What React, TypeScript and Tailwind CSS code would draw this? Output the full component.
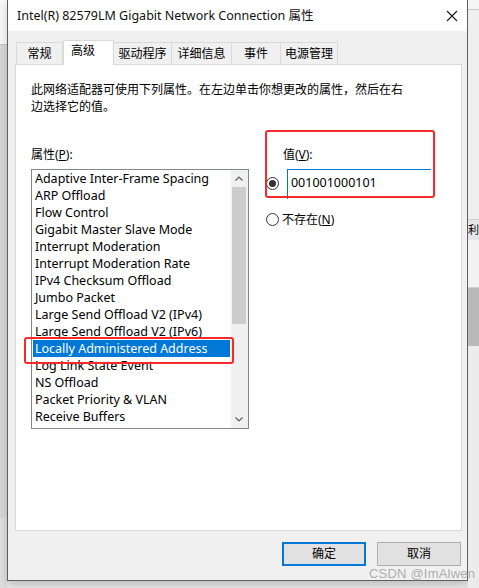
import React from 'react';

const items = [
  'Adaptive Inter-Frame Spacing',
  'ARP Offload',
  'Flow Control',
  'Gigabit Master Slave Mode',
  'Interrupt Moderation',
  'Interrupt Moderation Rate',
  'IPv4 Checksum Offload',
  'Jumbo Packet',
  'Large Send Offload V2 (IPv4)',
  'Large Send Offload V2 (IPv6)',
  'Locally Administered Address',
  'Log Link State Event',
  'NS Offload',
  'Packet Priority & VLAN',
  'Receive Buffers',
];

const tabs = [
  { label: '常规', w: 'w-[47px]' },
  { label: '高级', w: 'w-[51px]', active: true },
  { label: '驱动程序', w: 'w-[58px]' },
  { label: '详细信息', w: 'w-[60px]' },
  { label: '事件', w: 'w-[49px]' },
  { label: '电源管理', w: 'w-[57px]' },
];

const font = { fontFamily: '"Noto Sans", "Noto Sans CJK SC", sans-serif' };

const Radio: React.FC<{ checked?: boolean }> = ({ checked }) => (
  <div className="w-[13px] h-[13px] rounded-full border border-[#333333] bg-white flex items-center justify-center shrink-0">
    {checked && <div className="w-[7px] h-[7px] rounded-full bg-[#333333]" />}
  </div>
);

export default function App() {
  return (
    <div className="w-[479px] h-[588px] flex bg-[#e9e9e9] overflow-hidden relative text-[12px] text-black" style={font}>
      {/* backdrop left */}
      <div className="w-[7px] flex flex-col">
        <div className="h-[44px] bg-[#f7f7f7]" />
        <div className="flex-1 bg-[#d6d6d6] border-t border-[#c4c4c4]" />
        <div className="h-[70px] bg-[#dedede]" />
      </div>

      {/* window */}
      <div className="w-[465px] h-[581px] flex flex-col bg-[#f0f0f0] border-l border-r border-b border-[#5f5f5f] shadow-[0_4px_8px_rgba(0,0,0,0.18)]">
        <div className="h-[31px] bg-white flex items-center justify-between pl-[9px] pr-[8px]">
          <span className="text-[12.5px] leading-[17px] text-[#111]">Intel(R) 82579LM Gigabit Network Connection 属性</span>
          <svg width="12" height="12" viewBox="0 0 12 12" className="mr-[1px]">
            <path d="M1 1 L11 11 M11 1 L1 11" stroke="#1a1a1a" strokeWidth="1.1" />
          </svg>
        </div>

        <div className="flex-1 flex flex-col pt-[9px]">
          {/* tabs */}
          <div className="flex items-end ml-[8px] h-[24px] relative z-10">
            {tabs.map(t => (
              <div
                key={t.label}
                className={
                  t.active
                    ? `${t.w} h-[25px] -mb-px bg-white border border-b-0 border-[#d9d9d9] pl-[7px] leading-[20px] text-[12px]`
                    : `${t.w} h-[22px] bg-[#f0f0f0] border border-b-0 border-l-0 first:border-l border-[#d9d9d9] flex items-center justify-center text-[12px] leading-[16px]`
                }
              >
                {t.label}
              </div>
            ))}
          </div>

          {/* panel */}
          <div className="ml-[7px] w-[447px] h-[467px] bg-white border border-[#d9d9d9] pl-[15px] pt-[16px]">
            <div className="leading-[17px] text-[12px]">
              <div>此网络适配器可使用下列属性。在左边单击你想更改的属性，然后在右</div>
              <div>边选择它的值。</div>
            </div>

            <div className="flex items-start mt-[31px]">
              {/* left column */}
              <div className="flex flex-col">
                <div className="leading-[17px]">属性(<span className="underline">P</span>):</div>
                <div className="relative mt-[6px] w-[218px] h-[260px] border border-[#828790] flex bg-white">
                  <div className="flex-1 flex flex-col text-[12.5px]">
                    {items.map(item => {
                      const sel = item === 'Locally Administered Address';
                      return (
                        <div
                          key={item}
                          className={
                            sel
                              ? 'h-[17px] leading-[17px] mx-px pl-[2px] bg-[#0078d7] text-white whitespace-nowrap'
                              : 'h-[17px] leading-[17px] pl-[3px] text-black whitespace-nowrap'
                          }
                        >
                          {item}
                        </div>
                      );
                    })}
                  </div>
                  <div className="w-[17px] bg-[#f0f0f0] flex flex-col items-center">
                    <div className="h-[17px] flex items-center justify-center">
                      <svg width="8" height="5" viewBox="0 0 8 5">
                        <path d="M0.5 4.5 L4 1 L7.5 4.5" fill="none" stroke="#606060" strokeWidth="1.2" />
                      </svg>
                    </div>
                    <div className="w-[14px] h-[137px] bg-[#cdcdcd]" />
                    <div className="flex-1" />
                    <div className="h-[17px] flex items-center justify-center">
                      <svg width="8" height="5" viewBox="0 0 8 5">
                        <path d="M0.5 0.5 L4 4 L7.5 0.5" fill="none" stroke="#606060" strokeWidth="1.2" />
                      </svg>
                    </div>
                  </div>
                  {/* annotation */}
                  <div className="absolute left-[-8px] top-[167px] w-[210px] h-[27px] border-[2.5px] border-[#f52a2a] rounded-[3px]" />
                </div>
              </div>

              {/* right column */}
              <div className="relative ml-[17px] flex flex-col">
                <div className="leading-[17px] pl-[17px]">值(<span className="underline">V</span>):</div>
                <div className="flex items-start mt-[6px] gap-[8px]">
                  <div className="mt-[8px]"><Radio checked /></div>
                  <div className="w-[144px] h-[30px] border-t border-l border-[#0078d7] pl-[3px] pt-[4px] leading-[17px] text-[12.5px]">
                    001001000101
                  </div>
                </div>
                <div className="flex items-center mt-[12px] gap-[3px] leading-[17px]">
                  <Radio />
                  <span>不存在(<span className="underline">N</span>)</span>
                </div>
                <div className="absolute left-[-1px] top-[-16px] w-[170px] h-[68px] border-[2.5px] border-[#f52a2a] rounded-[3px]" />
              </div>
            </div>
          </div>

          {/* buttons */}
          <div className="flex justify-end gap-[11px] mt-[11px] mr-[6px]">
            <div className="w-[84px] h-[24px] border-2 border-[#0078d7] bg-[#e1e1e1] flex items-center justify-center leading-[16px]">确定</div>
            <div className="w-[84px] h-[24px] border border-[#adadad] bg-[#e1e1e1] flex items-center justify-center leading-[16px]">取消</div>
          </div>
        </div>
      </div>

      {/* backdrop right */}
      <div className="flex-1 flex flex-col">
        <div className="h-[10px] bg-[#f5f5f5] border-b border-[#c8c8c8]" />
        <div className="h-[210px] bg-[#efefef] border-b border-[#cfcfcf]" />
        <div className="h-[20px] bg-[#e6e6e6] text-[11px] leading-[20px] overflow-hidden">利</div>
        <div className="h-[48px] bg-[#f2f2f2] border-b border-[#d0d0d0]" />
        <div className="h-[58px] bg-[#b9b9b9]" />
        <div className="flex-1 bg-[#ececec]" />
      </div>

      {/* watermark */}
      <div
        className="absolute left-[369px] top-[566px] text-[13px] leading-[16px] text-[#a9a9a9] tracking-[0.2px]"
        style={{ fontFamily: '"Liberation Sans", Arial, sans-serif', textShadow: '0 0 1px #fff' }}
      >
        CSDN @ImAlwen
      </div>
    </div>
  );
}
